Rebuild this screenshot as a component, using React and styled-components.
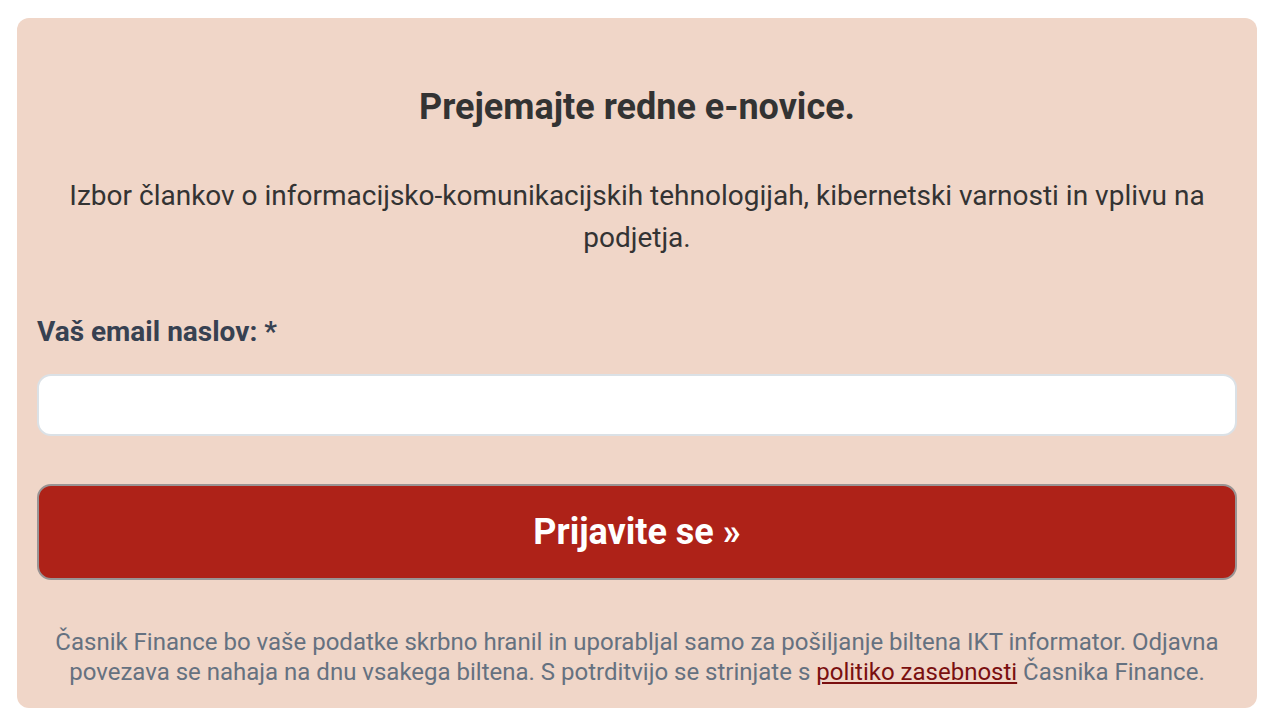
import React from 'react'
import styled, { createGlobalStyle } from 'styled-components'

const Global = createGlobalStyle`
  body {
    margin: 0;
    background: #ffffff;
    font-family: Roboto, "Liberation Sans", Arial, sans-serif;
  }
`

const Page = styled.div`
  padding: 18px 19px 20px 17px;
`

const Card = styled.form`
  background: #f0d6c8;
  border-radius: 12px;
  padding: 65px 20px 21px;
  display: flex;
  flex-direction: column;
`

const Title = styled.h2`
  margin: 0;
  text-align: center;
  font-size: 36px;
  font-weight: 700;
  color: #333333;
  line-height: 48px;
`

const Lead = styled.p`
  margin: 44px 20px 0;
  text-align: center;
  font-size: 28px;
  line-height: 42px;
  color: #333333;
`

const Label = styled.label`
  margin-top: 55px;
  font-size: 28px;
  font-weight: 700;
  color: #374151;
  line-height: 36px;
`

const Input = styled.input`
  margin-top: 24px;
  height: 62px;
  box-sizing: border-box;
  border: 2px solid #dbe1e6;
  border-radius: 14px;
  background: #ffffff;
  font-size: 22px;
  padding: 0 16px;
  outline: none;
`

const Button = styled.button`
  margin-top: 48px;
  height: 96px;
  box-sizing: border-box;
  border: 2px solid #999494;
  border-radius: 14px;
  background: #ae2218;
  color: #ffffff;
  font-family: inherit;
  font-size: 36px;
  font-weight: 700;
  cursor: pointer;
`

const Note = styled.p`
  margin: 47px 8px 0;
  text-align: center;
  font-size: 24px;
  line-height: 30px;
  color: #657180;
`

const Link = styled.a`
  color: #7a1010;
  text-decoration: underline;
`

export default function App() {
  return (
    <Page>
      <Global />
      <Card onSubmit={(e) => e.preventDefault()}>
        <Title>Prejemajte redne e-novice.</Title>
        <Lead>
          Izbor člankov o informacijsko-komunikacijskih tehnologijah, kibernetski varnosti in vplivu na podjetja.
        </Lead>
        <Label htmlFor="email">Vaš email naslov: *</Label>
        <Input id="email" type="email" />
        <Button type="submit">Prijavite se »</Button>
        <Note>
          Časnik Finance bo vaše podatke skrbno hranil in uporabljal samo za pošiljanje biltena IKT informator. Odjavna povezava se nahaja na dnu vsakega biltena. S potrditvijo se strinjate s <Link href="#">politiko zasebnosti</Link> Časnika Finance.
        </Note>
      </Card>
    </Page>
  )
}
